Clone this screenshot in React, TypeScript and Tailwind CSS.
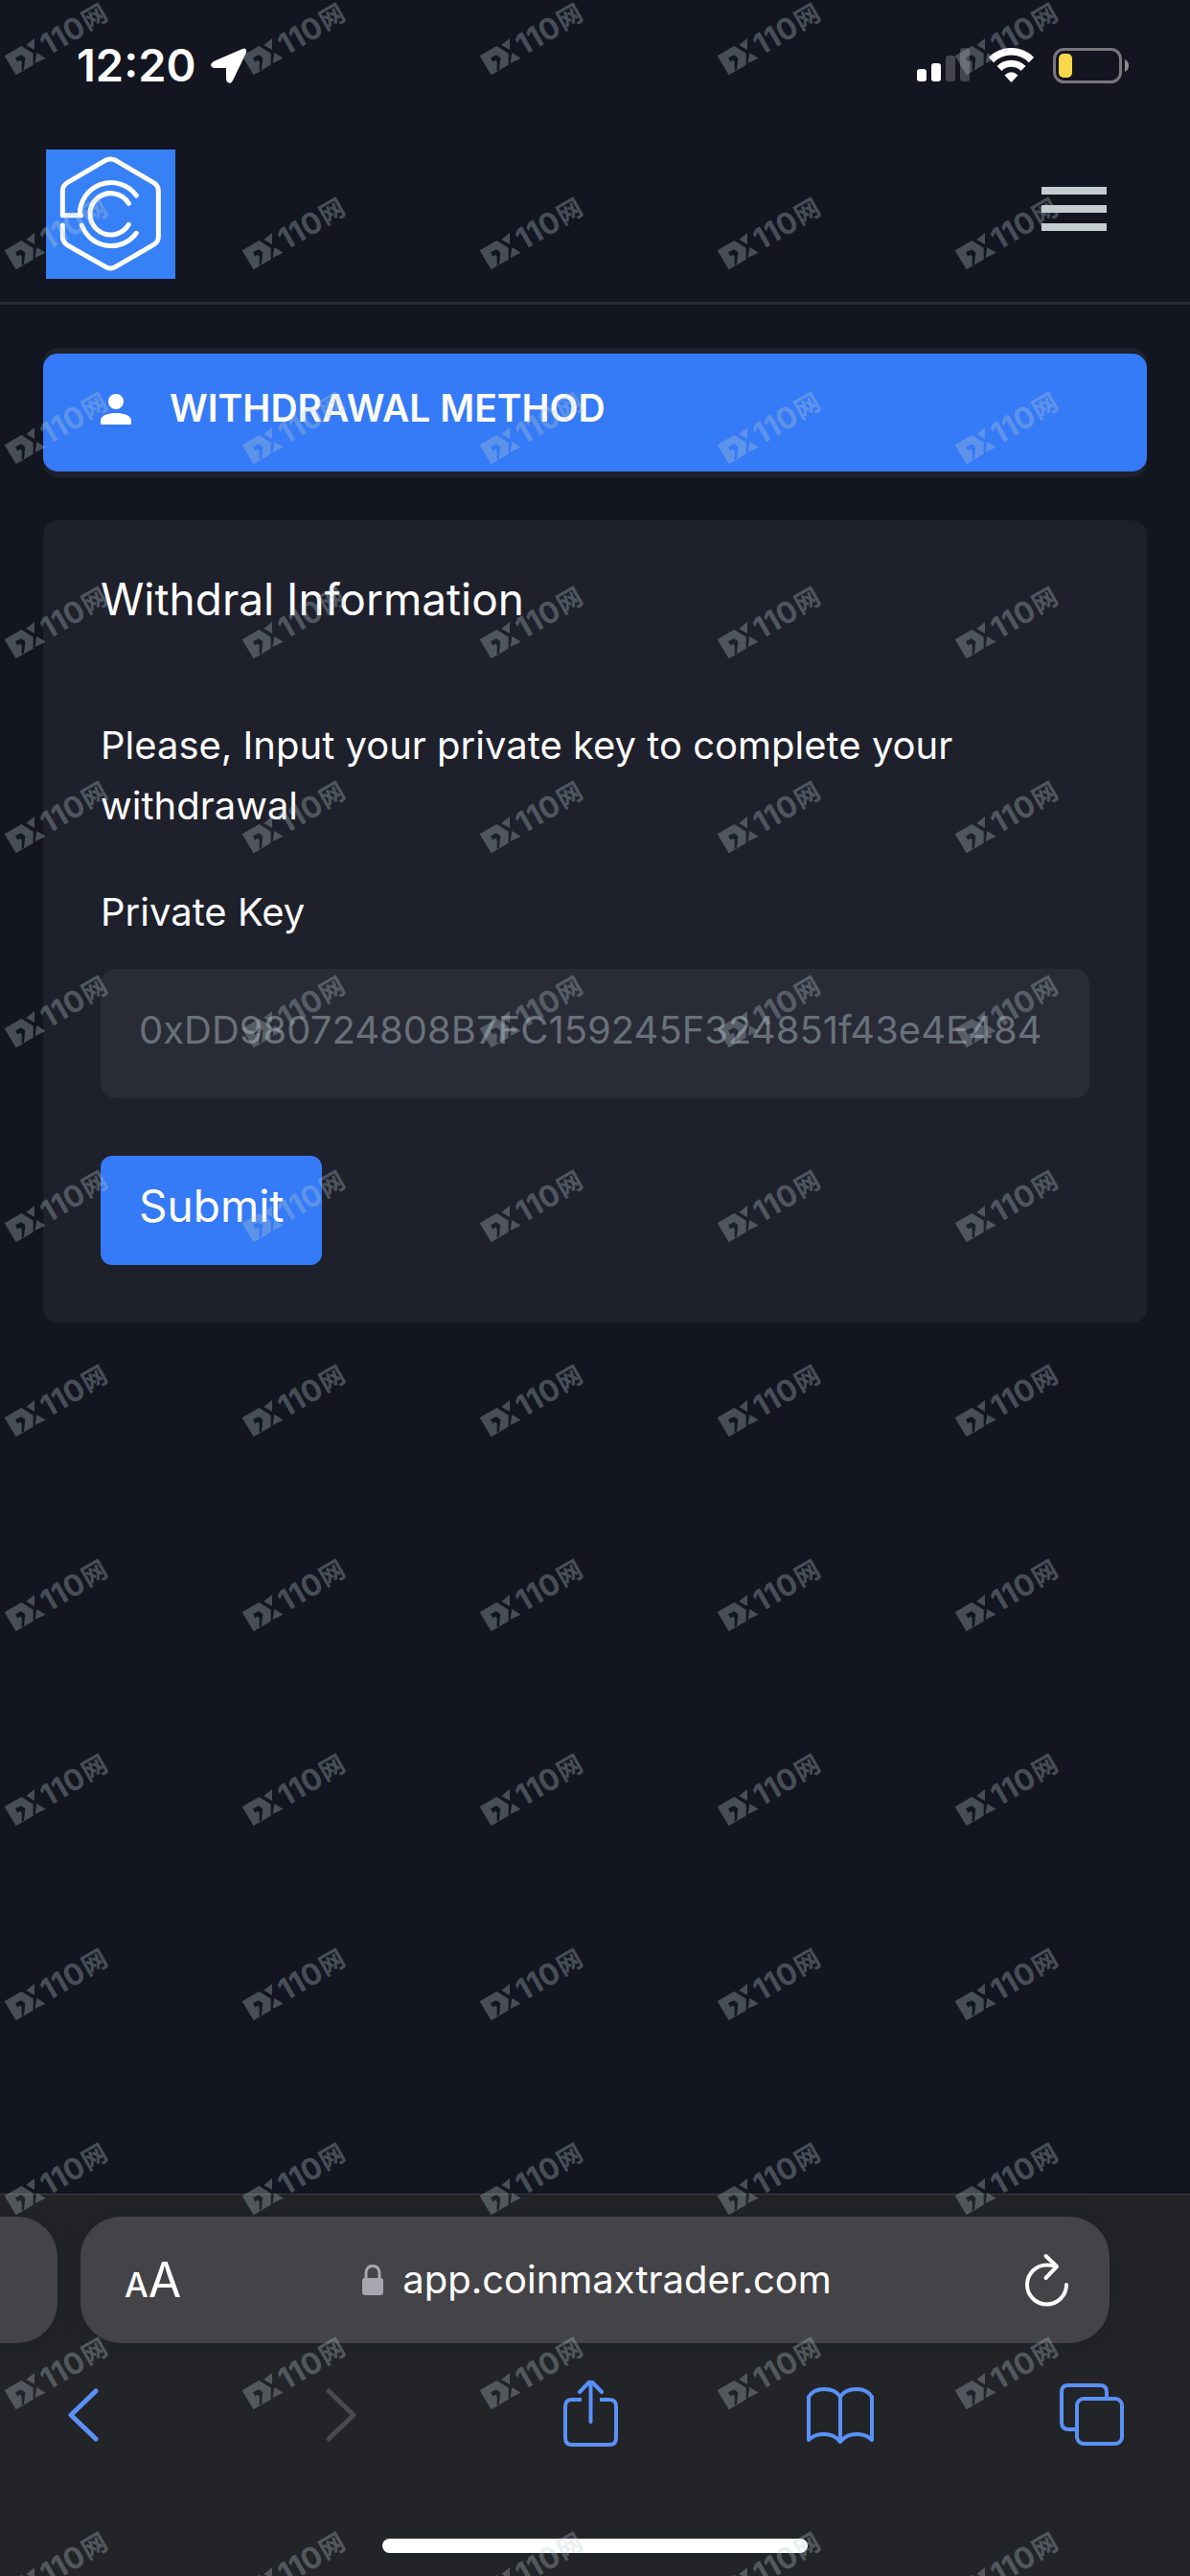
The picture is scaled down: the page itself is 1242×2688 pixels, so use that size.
const Logo = () => (
    <svg className="size-[135px] bg-[#3781f7]" viewBox="0 0 405 405" fill="none" stroke="#fff" strokeWidth="15" strokeLinecap="round" strokeLinejoin="round" aria-hidden="true">
        <path d="M110 206H52V130Q52 112 68 103L186 34Q202 26 218 34L337 104Q352 113 352 130V272Q352 289 337 298L218 367Q202 377 186 367L68 300Q52 290 52 272V237"/>
        <path d="M106 206A98 98 0 0 1 283 144"/>
        <path d="M112 237A98 98 0 0 0 283 262"/>
        <path d="M259 169A65 65 0 1 0 259 235"/>
    </svg>
);

const Watermark = () => (
    <svg className="h-[203px] w-[248px] overflow-visible" viewBox="0 0 248 203">
        <g fill="#bbcdd2" opacity="0.31">
            <path transform="translate(0 -3) scale(0.3333)" fillRule="evenodd" d="M14 184L67 153L104 176V212L50 244ZM48 190L66 181L79 190L75 227L68 231V202L62 197L55 203Z"/>
            <path transform="translate(0 -3) scale(0.3333)" d="M82 150L108 129V165ZM115 174L143 191L110 207Z"/>
            <g transform="translate(5 58) rotate(-30)">
                <text x="39" y="23" className="font-['Inter',sans-serif] text-[31px] font-bold">110</text>
                <text x="88" y="21" className="font-['Noto_Sans_CJK_SC',sans-serif] text-[26px] font-bold">网</text>
            </g>
        </g>
    </svg>
);

const StatusBar = () => (
    <div className="flex h-[136px] items-center justify-between pl-[80px] pr-[64px]">
        <div className="flex items-center gap-[16px]">
            <span className="text-[47px] leading-[60px] font-semibold">12:20</span>
            <svg className="h-[37px] w-[38px]" viewBox="0 0 38 37" fill="#fff" aria-hidden="true">
                <path d="M33 1Q38 -1 37 5L23 34Q21 38 18 36Q16 35 16 32V21H4Q1 21 0 18Q0 16 3 14Z"/>
            </svg>
        </div>
        <div className="flex items-center gap-[20px]">
            <svg className="h-[36px] w-[55px]" viewBox="0 0 55 36" aria-hidden="true">
                <rect x="0" y="22" width="10" height="13" rx="3" fill="#fff"/>
                <rect x="15" y="16" width="10" height="19" rx="3" fill="#fff"/>
                <rect x="30" y="8" width="10" height="27" rx="3" fill="#444550"/>
                <rect x="45" y="0" width="10" height="35" rx="3" fill="#444550"/>
            </svg>
            <svg className="h-[36px] w-[47px]" viewBox="0 0 47 36" fill="none" stroke="#fff" strokeWidth="7.500" aria-hidden="true">
                <path d="M2.500 12.500A29.500 29.500 0 0 1 44.500 12.500"/>
                <path d="M11 21.500A17.500 17.500 0 0 1 36 21.500" strokeWidth="7"/>
                <path d="M23.500 36L16.500 28.500Q23.500 22 30.500 28.500Z" fill="#fff" stroke="none"/>
            </svg>
            <svg className="h-[37px] w-[79px]" viewBox="0 0 79 37" aria-hidden="true">
                <rect x="1.500" y="1.500" width="69" height="34" rx="10" fill="none" stroke="#77777d" strokeWidth="3"/>
                <rect x="6" y="6" width="14" height="25" rx="5" fill="#f8d74a"/>
                <path d="M75 12Q79 14 79 18.500Q79 23 75 25Z" fill="#8d8d93"/>
            </svg>
        </div>
    </div>
);

const SafariBar = () => (
    <footer className="mt-auto border-t border-[#3d3f45] bg-[#232428] pt-[23px] pb-[24px]">
        <div className="flex gap-[24px] pr-[84px]">
            <div className="h-[132px] w-[60px] rounded-r-[42px] bg-[#444448] shadow-[0_0_24px_rgba(0,0,0,0.15)]"/>
            <div className="grid h-[132px] flex-1 grid-cols-[1fr_auto_1fr] items-center rounded-[42px] bg-[#444448] pl-[46px] pr-[42px] shadow-[0_0_24px_rgba(0,0,0,0.15)]">
                <button type="button" className="flex items-baseline justify-self-start pt-1 leading-[60px]" aria-label="Page settings">
                    <span className="text-[35px] font-medium">A</span>
                    <span className="text-[50px]">A</span>
                </button>
                <button type="button" className="flex items-center gap-[20px]">
                    <svg className="h-[32px] w-[22px]" viewBox="0 0 22 32" aria-hidden="true">
                        <path d="M4 16V9.500Q4 1.500 11 1.500Q18 1.500 18 9.500V16" fill="none" stroke="#a7a7af" strokeWidth="3"/>
                        <rect x="0" y="14" width="22" height="18" rx="3" fill="#a7a7af"/>
                    </svg>
                    <span className="text-[40px] leading-[60px]">app.coinmaxtrader.com</span>
                </button>
                <button type="button" className="justify-self-end" aria-label="Reload">
                    <svg className="h-[62px] w-[46px]" viewBox="0 0 46 62" fill="none" stroke="#fff" strokeWidth="4" strokeLinecap="round" strokeLinejoin="round" aria-hidden="true">
                        <path d="M43 36A20.500 20.500 0 1 1 22.500 15.500Q28 15.500 32 17"/>
                        <path d="M21.500 6L33 17L21.500 29"/>
                    </svg>
                </button>
            </div>
        </div>
        <nav className="flex h-[150px] items-center justify-between pl-[50px] pr-[67px] text-[#5a91f7]">
            <button type="button" aria-label="Back">
                <svg className="size-[72px]" viewBox="0 0 72 72" fill="none" stroke="currentColor" strokeWidth="5" strokeLinecap="round" strokeLinejoin="round">
                    <path d="M50 11L24 36L50 61"/>
                </svg>
            </button>
            <button type="button" disabled className="text-[#4a4a4d]" aria-label="Forward">
                <svg className="size-[72px]" viewBox="0 0 72 72" fill="none" stroke="currentColor" strokeWidth="5" strokeLinecap="round" strokeLinejoin="round">
                    <path d="M30 11L56 36L30 61"/>
                </svg>
            </button>
            <button type="button" aria-label="Share">
                <svg className="size-[72px]" viewBox="0 0 72 72" fill="none" stroke="currentColor" strokeWidth="4">
                    <path d="M30 20H20Q13 20 13 27V60Q13 67 20 67H59Q66 67 66 60V27Q66 20 59 20H49"/>
                    <path d="M39.500 43V1M28 12L39.500 0L51 12" strokeLinecap="round" strokeLinejoin="round"/>
                </svg>
            </button>
            <button type="button" aria-label="Bookmarks">
                <svg className="size-[72px]" viewBox="0 0 72 72" fill="none" stroke="currentColor" strokeWidth="4" strokeLinecap="round" strokeLinejoin="round">
                    <path d="M37 17Q32 9 20 9Q9 9 4 17V62Q10 56 20 56Q31 56 37 64Q43 56 54 56Q64 56 70 62V17Q65 9 54 9Q42 9 37 17V63"/>
                </svg>
            </button>
            <button type="button" aria-label="Tabs">
                <svg className="size-[72px]" viewBox="0 0 72 72" fill="none" stroke="currentColor" strokeWidth="4">
                    <rect x="21" y="19" width="47" height="47" rx="7"/>
                    <path d="M20 51H13Q5 51 5 44V12Q5 5 12 5H45Q52 5 52 12V18"/>
                </svg>
            </button>
        </nav>
        <div className="mx-auto mt-[54px] h-[15px] w-[444px] rounded-full bg-white"/>
    </footer>
);

const App = () => {
    return (
        <div className="relative flex min-h-screen flex-col bg-[#131520] font-['Inter',sans-serif] text-white">
            <StatusBar/>
            <header className="flex items-center justify-between border-b-3 border-[#282b37] pt-5 pr-[87px] pb-6 pl-12">
                <a href="#" aria-label="Home">
                    <Logo/>
                </a>
                <button type="button" className="mb-3 flex flex-col gap-[11px]" aria-label="Menu">
                    <span className="h-[8px] w-[68px] bg-[#c5cccf]"/>
                    <span className="h-[8px] w-[68px] bg-[#c5cccf]"/>
                    <span className="h-[8px] w-[68px] bg-[#c5cccf]"/>
                </button>
            </header>
            <main className="flex flex-col gap-[45px] px-[45px] py-[45px]">
                <div className="rounded-[15px] bg-[#1e202b] py-[6px]">
                    <button type="button" className="flex h-[123px] w-full items-center gap-[40px] rounded-[15px] bg-[#357af6] px-[60px] pb-[8px] text-[39px] font-semibold">
                        <svg className="size-[32px]" viewBox="0 0 32 32" fill="#fff" aria-hidden="true">
                            <circle cx="16" cy="8" r="8"/>
                            <path d="M0 32V28C0 22 9 20 16 20S32 22 32 28V32Z"/>
                        </svg>
                        WITHDRAWAL METHOD
                    </button>
                </div>
                <form className="rounded-[15px] bg-[#1e202b] px-[60px] pt-[52px] pb-[60px]">
                    <h2 className="text-[46px] leading-[60px]">Withdral Information</h2>
                    <p className="mt-[91px] text-[40px] leading-[63px]">Please, Input your private key to complete your withdrawal</p>
                    <label htmlFor="private-key" className="mt-[48px] block text-[40px] leading-[63px]">Private Key</label>
                    <input
                        id="private-key"
                        type="text"
                        placeholder="0xDD980724808B7FC159245F324851f43e4E484"
                        className="mt-[28px] block h-[135px] w-full rounded-[15px] bg-[#292b36] px-[40px] pb-[8px] text-[40px] placeholder:text-[#68717a]"
                    />
                    <button type="button" className="mt-[60px] block h-[114px] rounded-[12px] bg-[#357af6] px-[40px] pb-[10px] text-[46px]">Submit</button>
                </form>
            </main>
            <SafariBar/>
            <div className="pointer-events-none absolute inset-0 grid auto-rows-[203px] grid-cols-[repeat(auto-fill,248px)] overflow-hidden" aria-hidden="true">
                {Array.from({ length: 70 }, (_, i) => <Watermark key={i}/>)}
            </div>
        </div>
    );
}

export default App;
